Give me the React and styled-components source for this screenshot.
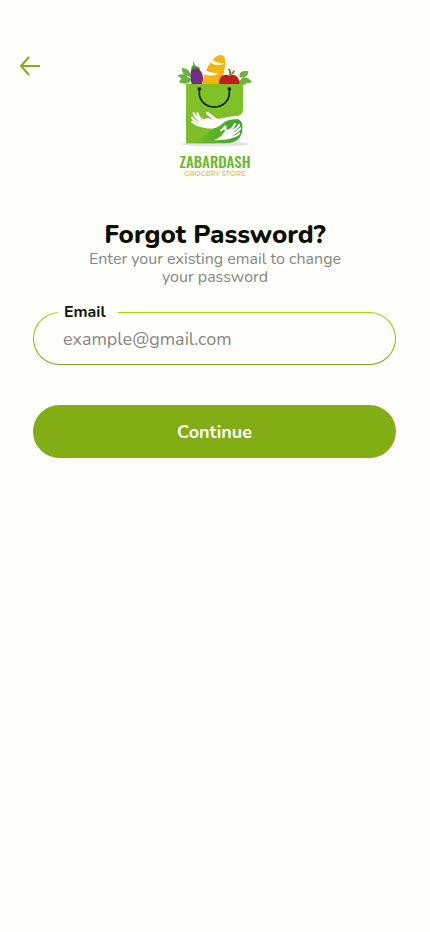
import React from "react";
import styled, { createGlobalStyle } from "styled-components";

const GlobalStyle = createGlobalStyle`
  *, *::before, *::after { box-sizing: border-box; }
  body {
    margin: 0;
    background: #fefffb;
    color: #0b1003;
    font-family: Nunito, "Open Sans", sans-serif;
  }
`;

const Screen = styled.main`
  display: flex;
  flex-direction: column;
  min-height: 100vh;
  padding: 53px 0 32px;
`;

const Header = styled.header`
  display: grid;
  grid-template-columns: 1fr auto 1fr;
  align-items: start;
  padding: 0 17px;
`;

const BackButton = styled.button`
  display: flex;
  justify-self: start;
  padding: 0;
  border: 0;
  background: none;
  color: #82ad14;
  cursor: pointer;
`;

const Brand = styled.div`
  display: flex;
  flex-direction: column;
  align-items: center;
`;

const BrandName = styled.span`
  margin-top: 3px;
  font: 500 15px/18px Oswald, "Roboto Condensed", sans-serif;
  color: #69b92e;
`;

const BrandTagline = styled.span`
  font: 500 7px/7px Montserrat, Nunito, sans-serif;
  color: #f2b52c;
`;

const Intro = styled.section`
  display: flex;
  flex-direction: column;
  align-items: center;
  margin-top: 43px;
  text-align: center;
`;

const Title = styled.h1`
  margin: 0;
  font-size: 26px;
  font-weight: 800;
  line-height: 30px;
`;

const Subtitle = styled.p`
  max-width: 270px;
  margin: 0;
  color: #858781;
  font-size: 16px;
  line-height: 18px;
`;

const Form = styled.form`
  display: flex;
  flex-direction: column;
  gap: 40px;
  padding: 0 34px 0 33px;
  margin-top: 26px;
`;

const Field = styled.div`
  position: relative;
  display: flex;
`;

const FieldLabel = styled.label`
  position: absolute;
  top: -10px;
  left: 25px;
  padding: 0 12px 0 6px;
  background: #fefffb;
  font-size: 16px;
  font-weight: 700;
  line-height: 20px;
`;

const TextInput = styled.input`
  flex: 1;
  min-width: 0;
  height: 53px;
  padding: 0 29px;
  border: 1px solid transparent;
  border-radius: 27px;
  outline: 0;
  background:
    linear-gradient(#fefffb, #fefffb) padding-box,
    linear-gradient(#9cda0c, #7ca616) border-box;
  color: #0b1003;
  font: 400 18px/24px Nunito, "Open Sans", sans-serif;

  &::placeholder { color: #858781; opacity: 1; }
`;

const SubmitButton = styled.button`
  height: 53px;
  border: 0;
  border-radius: 27px;
  background: #82ad14;
  color: #fefffb;
  font: 700 18px/24px Nunito, "Open Sans", sans-serif;
  cursor: pointer;
`;

const BackArrow = () => (
  <svg width="26" height="26" viewBox="0 0 26 26" fill="none" stroke="currentColor" strokeWidth="2" aria-hidden="true">
    <path d="M23 13H4M12 4 4 13l8 9" />
  </svg>
);

const BagLogo = () => (
  <svg width="78" height="96" viewBox="18 24 234 288" aria-hidden="true">
    <defs>
      <linearGradient id="bag" x1="0" y1="0" x2="0" y2="1">
        <stop offset="0" stopColor="#80c226" />
        <stop offset="1" stopColor="#7dbe2a" />
      </linearGradient>
      <linearGradient id="sleeve" x1="0" y1="0" x2="1" y2="0">
        <stop offset="0" stopColor="#7fc528" />
        <stop offset="1" stopColor="#36a12b" />
      </linearGradient>
    </defs>
    <ellipse cx="136" cy="297" rx="100" ry="7" fill="#e3e4e1" />
    <g fill="#6cb33f">
      <path d="M62 96C43 94 34 83 36 69c17 1 27 11 26 27ZM55 102c-14 4-25 0-32-11 14-7 29-4 32 11ZM64 102c-2 14-20 18-37 10 5-15 23-21 37-10Z" />
      <path d="M209 97c-2-15 6-21 26-18 0 15-11 21-26 18ZM212 103c10-10 24-7 34 8-15 7-30 4-34-8ZM206 113c2-15 14-10 23 5l-16 2Z" />
    </g>
    <path d="M65 118c-5-20-6-45 5-50 16-3 31 15 29 37l-3 14Z" fill="#752b83" />
    <path d="M69 50c6 5 6 10 5 13 10 0 16 4 17 12-5-1-9-4-13-6l-4 6-3-6-7 7c-1-9 1-13 6-15Z" fill="#459c37" />
    <path d="M96 119c4-29 20-67 41-83 15-12 29-6 29 13 0 23-7 45-17 70Z" fill="#f2b510" />
    <path d="M128 44c10 9 22 11 35 11-9 8-29 6-42-2ZM107 76c12 7 25 8 38 9-9 9-29 8-44 2Z" fill="#fffef4" />
    <path d="M147 119c-1-25 13-35 31-27 16-8 31 5 31 27Z" fill="#c51a1b" />
    <path d="M178 94c1-9-1-16-4-22l5-1c5 7 5 14 4 22Z" fill="#5c7f22" />
    <path d="M183 89c2-9 6-13 12-14 0 8-4 14-12 14Z" fill="#58a937" />
    <path d="M48 117h171v75c0 14-8 20-21 22l-60 30v51H48Z" fill="url(#bag)" />
    <path d="M48 295c32-5 65-28 88-49 14-13 27-21 42-25h20c14 2 19 12 19 22v7c0 29-19 45-50 45Z" fill="url(#sleeve)" />
    <path d="M217 207c-3 11-11 15-23 16-18 1-29 6-41 16-15 13-38 15-55 7-8-4-11-13-7-19l20-8c8 1 15 5 23 4 27-2 41-9 64-9 10-1 15-3 19-7Z" fill="#fff" />
    <g fill="none" stroke="#fff" strokeLinecap="round" strokeWidth="7">
      <path d="M104 230C92 224 85 216 82 205M100 233c-14-7-24-15-29-28M98 238c-14-4-25-10-32-20M101 244c-14-2-25-5-34-13" />
      <path d="M143 226c-13-4-20-14-31-21" strokeWidth="9" />
    </g>
    <path d="M190 255c-10-9-23 0-30 10-5 8-14 16-28 20 16 2 32-2 43-2 11-1 22-14 15-28Z" fill="#fff" />
    <g fill="none" stroke="#fff" strokeLinecap="round" strokeWidth="6">
      <path d="M176 258c9-5 15-12 19-21M182 262c12-6 20-13 26-23M184 269c13-4 21-11 27-19M180 277c12-1 21-5 28-12" />
      <path d="M170 264c-6-4-2-13-4-19M166 244c-3 5-7 9-13 12" />
    </g>
    <path d="M88 134v10c0 23 19 42 45 42s45-19 45-42v-10" fill="none" stroke="#111c0b" strokeWidth="5" />
    <g fill="#111c0b" stroke="#9bc65b" strokeWidth="1">
      <circle cx="88" cy="132" r="6" />
      <circle cx="178" cy="132" r="6" />
    </g>
  </svg>
);

export default function App() {
  return (
    <>
      <GlobalStyle />
      <Screen>
        <Header>
          <BackButton type="button" aria-label="Back">
            <BackArrow />
          </BackButton>
          <Brand>
            <BagLogo />
            <BrandName>ZABARDASH</BrandName>
            <BrandTagline>GROCERY STORE</BrandTagline>
          </Brand>
        </Header>
        <Intro>
          <Title>Forgot Password?</Title>
          <Subtitle>Enter your existing email to change your password</Subtitle>
        </Intro>
        <Form onSubmit={(event) => event.preventDefault()}>
          <Field>
            <TextInput id="email" type="email" placeholder="example@gmail.com" />
            <FieldLabel htmlFor="email">Email</FieldLabel>
          </Field>
          <SubmitButton type="submit">Continue</SubmitButton>
        </Form>
      </Screen>
    </>
  );
}
